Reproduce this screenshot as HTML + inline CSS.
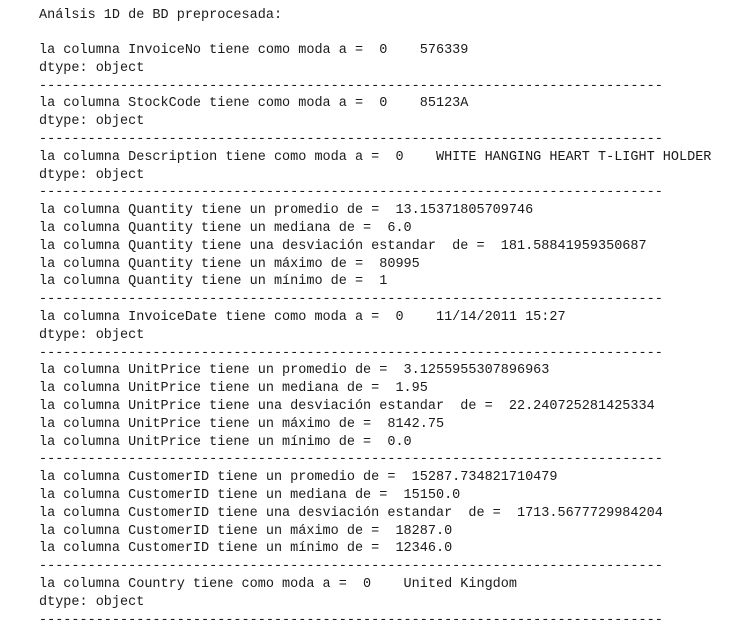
<!DOCTYPE html>
<html><head><meta charset="utf-8"><style>
html,body{margin:0;padding:0;background:#fff;width:748px;height:631px;overflow:hidden}
pre{margin:0;position:absolute;left:39px;top:6.5px;font-family:"Liberation Mono","DejaVu Sans Mono",monospace;font-size:13.5px;line-height:17.8px;color:#1a1a1a}
</style></head><body><pre>Análsis 1D de BD preprocesada:

la columna InvoiceNo tiene como moda a =  0    576339
dtype: object
-----------------------------------------------------------------------------
la columna StockCode tiene como moda a =  0    85123A
dtype: object
-----------------------------------------------------------------------------
la columna Description tiene como moda a =  0    WHITE HANGING HEART T-LIGHT HOLDER
dtype: object
-----------------------------------------------------------------------------
la columna Quantity tiene un promedio de =  13.15371805709746
la columna Quantity tiene un mediana de =  6.0
la columna Quantity tiene una desviación estandar  de =  181.58841959350687
la columna Quantity tiene un máximo de =  80995
la columna Quantity tiene un mínimo de =  1
-----------------------------------------------------------------------------
la columna InvoiceDate tiene como moda a =  0    11/14/2011 15:27
dtype: object
-----------------------------------------------------------------------------
la columna UnitPrice tiene un promedio de =  3.1255955307896963
la columna UnitPrice tiene un mediana de =  1.95
la columna UnitPrice tiene una desviación estandar  de =  22.240725281425334
la columna UnitPrice tiene un máximo de =  8142.75
la columna UnitPrice tiene un mínimo de =  0.0
-----------------------------------------------------------------------------
la columna CustomerID tiene un promedio de =  15287.734821710479
la columna CustomerID tiene un mediana de =  15150.0
la columna CustomerID tiene una desviación estandar  de =  1713.5677729984204
la columna CustomerID tiene un máximo de =  18287.0
la columna CustomerID tiene un mínimo de =  12346.0
-----------------------------------------------------------------------------
la columna Country tiene como moda a =  0    United Kingdom
dtype: object
-----------------------------------------------------------------------------</pre></body></html>
